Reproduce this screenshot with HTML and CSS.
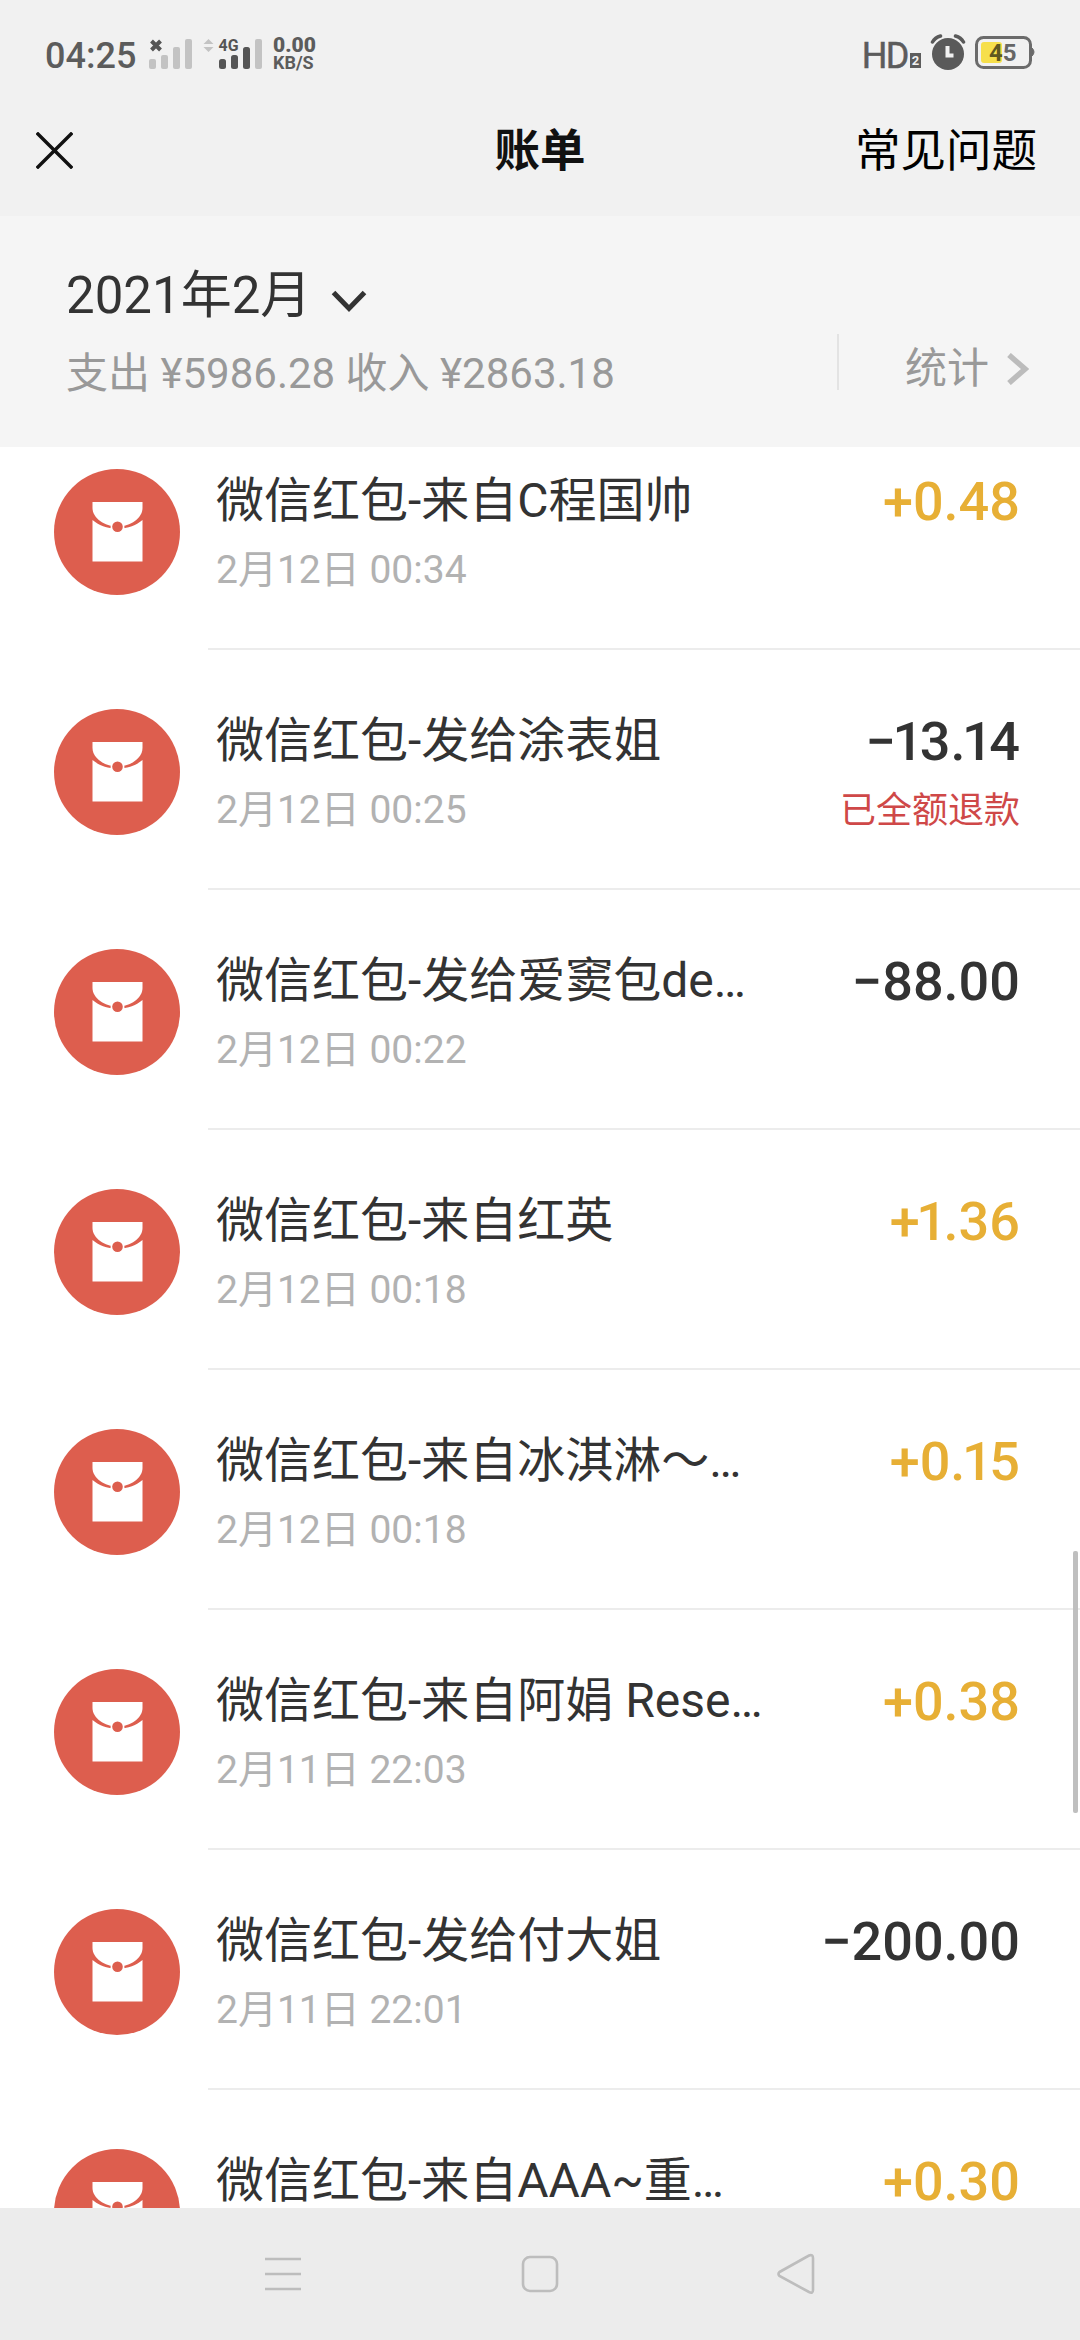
FILE: index.html
```html
<!DOCTYPE html>
<html lang="zh-CN">
<head>
<meta charset="utf-8">
<title>账单</title>
<link rel="stylesheet" href="styles.css">
</head>
<body>
<svg width="0" height="0" class="defs">
  <symbol id="packet" viewBox="0 0 126 126">
    <circle cx="63" cy="63" r="63" fill="#dd5e4e"/>
    <path d="M38.500 33h50v6c0 10-12 18.500-25 18.500s-25-8.500-25-18.500z" fill="#fff"/>
    <path d="M38.500 51c6 5 14 8.500 25 8.500s19-3.500 25-8.500V92.500h-50z" fill="#fff"/>
    <circle cx="63.500" cy="58" r="7" fill="#fff"/>
    <circle cx="63.500" cy="57.700" r="5.300" fill="#dd5e4e"/>
  </symbol>
</svg>
<div class="screen">
  <header class="top">
    <div class="status">
      <span class="clock">04:25</span>
      <svg class="signals" width="114" height="34" viewBox="0 0 114 34">
        <path d="M2.500 4l9 9M11.500 4l-9 9" stroke="#555" stroke-width="4"/>
        <g fill="#c3c3c3">
          <rect x="0" y="22" width="7" height="10" rx="2"/>
          <rect x="12" y="18" width="7" height="14" rx="2"/>
          <rect x="24" y="10" width="7" height="22" rx="2"/>
          <rect x="36" y="2" width="7" height="30" rx="2"/>
          <path d="M54.500 7l5-5 5 5zM54.500 10h10l-5 5z"/>
          <rect x="106" y="2" width="7" height="30" rx="2"/>
        </g>
        <g fill="#555">
          <rect x="70" y="22" width="7" height="10" rx="2.500"/>
          <rect x="82" y="18" width="7" height="14" rx="2.500"/>
          <rect x="94" y="10" width="7" height="22" rx="2.500"/>
          <text x="69.500" y="14" class="net" textLength="20" lengthAdjust="spacingAndGlyphs">4G</text>
        </g>
      </svg>
      <span class="speed"><b>0.00</b><i>KB/S</i></span>
      <span class="hd">HD</span><span class="sim">2</span>
      <svg class="alarm" width="36" height="37" viewBox="0 0 36 37">
        <circle cx="18" cy="20" r="16" fill="#5a5a5a"/>
        <path d="M2.500 8Q5 3.500 10.500 2M33.500 8Q31 3.500 25.500 2" fill="none" stroke="#5a5a5a" stroke-width="3.500" stroke-linecap="round"/>
        <path d="M17.500 12v9.500h6" fill="none" stroke="#f1f1f1" stroke-width="4"/>
      </svg>
      <svg class="battery" width="61" height="34" viewBox="0 0 61 34">
        <rect x="6" y="6" width="21" height="21" rx="3" fill="#f6df4b"/>
        <rect x="1.500" y="1.500" width="54" height="30" rx="7" fill="none" stroke="#6b6b6b" stroke-width="3"/>
        <path d="M57 12q4 4 0 8z" fill="#6b6b6b" stroke="#6b6b6b"/>
        <text x="14" y="25" class="charge"><tspan fill="#5f5720">4</tspan><tspan fill="#666">5</tspan></text>
      </svg>
    </div>
    <nav class="bar">
      <svg width="37" height="37" viewBox="0 0 37 37"><path d="M.8.800l35.400 35.400M36.200.800L.8 36.200" stroke="#111" stroke-width="3.400"/></svg>
      <h1>账单</h1>
      <a>常见问题</a>
    </nav>
  </header>
  <section class="month">
    <div class="summary">
      <div class="date">2021年2月<svg width="36" height="24" viewBox="0 0 36 24"><path d="M2.500 2.500L18 18.500 33.500 2.500" fill="none" stroke="#333" stroke-width="5"/></svg></div>
      <div class="totals">支出 ¥5986.28 收入 ¥2863.18</div>
    </div>
    <div class="stats"><span>统计</span><svg width="22" height="32" viewBox="0 0 22 32"><path d="M2 2l16 14L2 30" fill="none" stroke="#bcbcbc" stroke-width="5.500"/></svg></div>
  </section>
  <main class="list">
    <div class="row"><svg class="icon"><use href="#packet"/></svg><div class="body"><div class="info"><div class="name">微信红包-来自C程国帅</div><div class="time">2月12日 00:34</div></div><div class="money"><div class="amt in">+0.48</div></div></div></div>
    <div class="row"><svg class="icon"><use href="#packet"/></svg><div class="body"><div class="info"><div class="name">微信红包-发给涂表姐</div><div class="time">2月12日 00:25</div></div><div class="money"><div class="amt">−<span class="one">1</span>3.<span class="one">1</span>4</div><div class="refund">已全额退款</div></div></div></div>
    <div class="row"><svg class="icon"><use href="#packet"/></svg><div class="body"><div class="info"><div class="name">微信红包-发给爱窦包de…</div><div class="time">2月12日 00:22</div></div><div class="money"><div class="amt">−88.00</div></div></div></div>
    <div class="row"><svg class="icon"><use href="#packet"/></svg><div class="body"><div class="info"><div class="name">微信红包-来自红英</div><div class="time">2月12日 00:18</div></div><div class="money"><div class="amt in">+<span class="one">1</span>.36</div></div></div></div>
    <div class="row"><svg class="icon"><use href="#packet"/></svg><div class="body"><div class="info"><div class="name">微信红包-来自冰淇淋～…</div><div class="time">2月12日 00:18</div></div><div class="money"><div class="amt in">+0.<span class="one">1</span>5</div></div></div></div>
    <div class="row"><svg class="icon"><use href="#packet"/></svg><div class="body"><div class="info"><div class="name">微信红包-来自阿娟 Rese…</div><div class="time">2月11日 22:03</div></div><div class="money"><div class="amt in">+0.38</div></div></div></div>
    <div class="row"><svg class="icon"><use href="#packet"/></svg><div class="body"><div class="info"><div class="name">微信红包-发给付大姐</div><div class="time">2月11日 22:01</div></div><div class="money"><div class="amt">−200.00</div></div></div></div>
    <div class="row"><svg class="icon"><use href="#packet"/></svg><div class="body"><div class="info"><div class="name">微信红包-来自AAA~重…</div></div><div class="money"><div class="amt in">+0.30</div></div></div></div>
    <div class="thumb"></div>
  </main>
  <footer class="keys">
    <svg width="40" height="42" viewBox="0 0 40 42"><path d="M2 6h36M2 21h36M2 36h36" stroke="#bdbdbd" stroke-width="2.600"/></svg>
    <svg width="40" height="42" viewBox="0 0 40 42"><rect x="3" y="4" width="34" height="34" rx="7" fill="none" stroke="#bdbdbd" stroke-width="2.600"/></svg>
    <svg width="40" height="42" viewBox="0 0 40 42"><path d="M2.500 19L32 2.500q4-1.500 4 2.500v32q0 4-4 2L2.500 23q-2-2 0-4z" fill="none" stroke="#bdbdbd" stroke-width="2.600"/></svg>
  </footer>
</div>
</body>
</html>
```

FILE: styles.css
```css
* { box-sizing: border-box; margin: 0; padding: 0; }
body { font-family: Roboto, "Noto Sans CJK SC", sans-serif; background: #fff; color: #333; }
svg { display: block; flex: none; }
.defs { position: absolute; }
.screen { width: 1080px; height: 2340px; display: flex; flex-direction: column; overflow: hidden; white-space: nowrap; }
.top { height: 216px; background: #f1f1f1; flex: none; }
.status { height: 84px; padding: 24px 49px 0 45px; display: flex; align-items: center; color: #5c5c5c; }
.clock { font-size: 36px; font-weight: 500; line-height: 36px; width: 104px; padding-top: 3px; }
.signals { margin-top: -1px; }
.net { font-size: 17px; font-weight: 700; }
.speed { margin: -2px auto 0 10px; display: flex; flex-direction: column; font-weight: 700; }
.speed b { font-size: 21px; line-height: 18px; }
.speed i { font-size: 18px; line-height: 17px; font-style: normal; }
.hd { font-size: 36px; line-height: 36px; letter-spacing: -1.5px; -webkit-text-stroke: .5px; padding-top: 3px; }
.sim { width: 11px; height: 15px; margin: 13px 9px 0 2px; background: #5c5c5c; color: #f1f1f1; font-size: 13px; line-height: 15px; font-weight: 700; text-align: center; }
.alarm { margin: -4px 9px 0 0; }
.battery { margin: -2px -5px 0 0; }
.charge { font-size: 24px; font-weight: 700; }
.bar { height: 132px; padding: 0 43px 0 36px; display: grid; grid-template-columns: 1fr auto 1fr; align-items: center; color: #000; }
.bar h1 { font-size: 45.500px; line-height: 66px; font-weight: 700; color: #111; padding: 4px 0 0 7px; }
.bar a { font-size: 45.500px; line-height: 66px; text-align: right; padding-top: 3px; }
.month { height: 231px; flex: none; background: #f5f5f5; padding: 42px 51px 0 66px; display: flex; justify-content: space-between; }
.date { display: flex; align-items: center; gap: 20px; font-size: 51px; line-height: 76px; }
.date svg { margin-top: 11px; }
.totals { font-size: 42px; line-height: 60px; color: #999; margin-top: 10px; }
.stats { height: 56px; margin-top: 76px; width: 192px; border-left: 2px solid #e3e3e3; display: flex; align-items: center; justify-content: flex-end; gap: 18px; font-size: 42px; color: #999; }
.stats span { padding-top: 4px; }
.stats svg { margin-top: 14px; }
.list { height: 1761px; flex: none; overflow: hidden; position: relative; }
.row { height: 240px; display: flex; padding-left: 54px; gap: 28px; }
.row:first-child { margin-top: -37px; }
.icon { width: 126px; height: 126px; margin-top: 59px; }
.body { flex: 1; display: flex; justify-content: space-between; padding: 63px 60px 0 8px; border-bottom: 2px solid #ececec; }
.name { font-size: 48px; line-height: 56px; }
.time { font-size: 39px; line-height: 48px; margin-top: 17px; color: #b2b2b2; }
.money { text-align: right; margin-top: -1px; }
.amt { font-size: 54px; line-height: 60px; font-weight: 500; }
.in { color: #e7af35; }
.one { letter-spacing: -3.400px; margin-left: -3.400px; }
.refund { font-size: 36px; line-height: 48px; margin-top: 15px; color: #cf4848; }
.thumb { position: absolute; left: 1073px; top: 1104px; width: 5px; height: 262px; border-radius: 2px; background: #bfbfbf; }
.keys { height: 132px; background: #ececec; display: grid; grid-template-columns: repeat(3, 257px); justify-content: center; justify-items: center; align-items: center; }
```
